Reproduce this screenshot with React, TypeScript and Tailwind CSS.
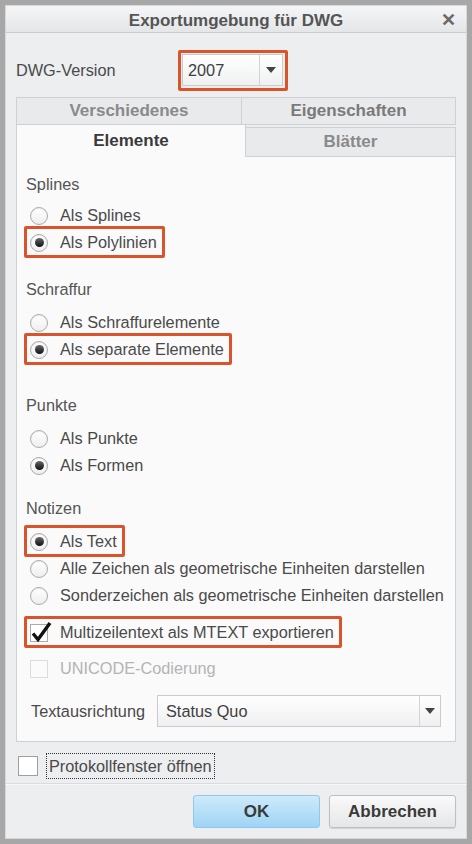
import type { ReactNode } from 'react';

const FONT = "font-['Liberation_Sans',Arial,sans-serif]";

// Red annotation frame drawn over a control (the screenshot's highlight).
function Mark({ children, className = '' }: { children: ReactNode; className?: string }) {
  return (
    <div className={`relative inline-flex ${className}`}>
      {children}
      <span className="pointer-events-none absolute -left-[2px] -right-[8px] -top-[3px] -bottom-[2px] rounded-[2px] border-[3px] border-[#d9532b]" />
    </div>
  );
}

function Radio({ checked, label }: { checked?: boolean; label: string }) {
  return (
    <div className="flex h-[27px] items-center">
      <span className="ml-[4px] flex h-[18px] w-[18px] items-center justify-center rounded-full border border-[#a9abad] bg-gradient-to-b from-white to-[#eeeeee] shadow-[inset_0_1px_1px_rgba(0,0,0,0.08)]">
        {checked && <span className="h-[9px] w-[9px] rounded-full bg-gradient-to-b from-[#6a6a6a] to-[#111]" />}
      </span>
      <span className="ml-[12px] text-[16.3px] text-[#4a4a4a]">{label}</span>
    </div>
  );
}

function Arrow() {
  return (
    <svg width="10" height="6" viewBox="0 0 10 6">
      <path d="M0 0h10L5 6z" fill="#444" />
    </svg>
  );
}

function SectionLabel({ children, className = '' }: { children: ReactNode; className?: string }) {
  return <div className={`flex h-[20px] items-center text-[16.3px] text-[#555] ${className}`}>{children}</div>;
}

export default function App() {
  return (
    <div className={`h-[844px] w-[472px] bg-[#a7a7a7] p-[5px] ${FONT}`}>
      <div className="flex h-full flex-col border border-[#d6d8da] bg-[#eceef0]">
        {/* title bar */}
        <div className="relative flex h-[27px] shrink-0 items-center justify-center border-b border-[#c9cbce] bg-gradient-to-b from-[#f4f5f6] to-[#e4e6e8] pt-[3px]">
          <span className="text-[17px] font-bold text-[#555]">Exportumgebung für DWG</span>
          <span className="absolute right-[10px] top-[4px] text-[18px] font-bold leading-[20px] text-[#6a6a6a]">✕</span>
        </div>

        <div className="flex flex-col px-[10px]">
          {/* DWG version */}
          <div className="mt-[21px] flex h-[32px] items-center">
            <span className="w-[166px] text-[16.3px] text-[#4a4a4a]">DWG-Version</span>
            <div className="relative flex">
              <div className="flex h-[32px] w-[101px] border border-[#c9cbce] bg-gradient-to-b from-white to-[#eff0f1]">
                <span className="flex flex-1 items-center pl-[5px] text-[16.3px] text-[#3f3f3f]">2007</span>
                <span className="flex w-[23px] items-center justify-center border-l border-[#d2d4d6]">
                  <Arrow />
                </span>
              </div>
              <span className="pointer-events-none absolute -left-[4px] -right-[5px] -top-[4px] -bottom-[5px] rounded-[2px] border-[3px] border-[#d9532b]" />
            </div>
          </div>

          {/* tabs */}
          <div className="mt-[11px] flex h-[28px] text-[17px] font-bold">
            <div className="flex w-[226px] items-center justify-center border border-[#cfd2d5] bg-[#e8eaec] text-[#8a8a8a]">Verschiedenes</div>
            <div className="flex flex-1 items-center justify-center border border-l-0 border-[#cfd2d5] bg-[#e8eaec] text-[#7a7a7a]">Eigenschaften</div>
          </div>
          <div className="-mt-[1px] flex h-[33px] text-[17px] font-bold">
            <div className="flex w-[230px] items-center justify-center border border-b-0 border-[#cfd2d5] bg-[#fafafa] text-[#3a3a3a]">Elemente</div>
            <div className="mt-[3px] flex flex-1 items-center justify-center border border-l-0 border-[#cfd2d5] bg-[#e8eaec] text-[#8a8a8a]">Blätter</div>
          </div>

          {/* panel */}
          <div className="flex flex-col border border-t-0 border-[#cfd2d5] bg-[#fafafa] px-[9px] pb-[14px]">
            <SectionLabel className="mt-[17px]">Splines</SectionLabel>
            <div className="mt-[8px]">
              <Radio label="Als Splines" />
              <Mark>
                <Radio checked label="Als Polylinien" />
              </Mark>
            </div>

            <SectionLabel className="mt-[23px]">Schraffur</SectionLabel>
            <div className="mt-[10px]">
              <Radio label="Als Schraffurelemente" />
              <Mark>
                <Radio checked label="Als separate Elemente" />
              </Mark>
            </div>

            <SectionLabel className="mt-[32px]">Punkte</SectionLabel>
            <div className="mt-[10px]">
              <Radio label="Als Punkte" />
              <Radio checked label="Als Formen" />
            </div>

            <SectionLabel className="mt-[19px]">Notizen</SectionLabel>
            <div className="mt-[10px] flex flex-col items-start">
              <Mark>
                <Radio checked label="Als Text" />
              </Mark>
              <Radio label="Alle Zeichen als geometrische Einheiten darstellen" />
              <Radio label="Sonderzeichen als geometrische Einheiten darstellen" />
            </div>

            <div className="mt-[10px] flex">
              <Mark>
                <div className="flex h-[27px] items-center">
                  <span className="relative ml-[4px] h-[18px] w-[18px] border border-[#a9abad] bg-white">
                    <svg className="absolute -left-[1px] -top-[5px]" width="24" height="24" viewBox="0 0 24 24">
                      <path d="M3 13.5l5 6L20 3" fill="none" stroke="#111" strokeWidth="3.4" strokeLinejoin="miter" />
                    </svg>
                  </span>
                  <span className="ml-[12px] text-[16.3px] text-[#4a4a4a]">Multizeilentext als MTEXT exportieren</span>
                </div>
              </Mark>
            </div>

            <div className="mt-[9px] flex h-[27px] items-center">
              <span className="ml-[4px] h-[18px] w-[18px] border border-[#dcdcdc] bg-[#fbfbfb]" />
              <span className="ml-[12px] text-[16.3px] text-[#b4b4b4]">UNICODE-Codierung</span>
            </div>

            <div className="mt-[13px] flex h-[32px] items-center">
              <span className="ml-[5px] w-[126px] text-[16.3px] text-[#4a4a4a]">Textausrichtung</span>
              <div className="mr-[5px] flex h-[32px] flex-1 border border-[#c9cbce] bg-gradient-to-b from-white to-[#eff0f1]">
                <span className="flex flex-1 items-center pl-[8px] text-[16.3px] text-[#3f3f3f]">Status Quo</span>
                <span className="flex w-[21px] items-center justify-center border-l border-[#d2d4d6]">
                  <Arrow />
                </span>
              </div>
            </div>
          </div>

          {/* protocol checkbox */}
          <div className="mt-[10px] flex h-[28px] items-center">
            <span className="ml-[2px] h-[20px] w-[20px] border border-[#9d9fa1] bg-white" />
            <span className="ml-[8px] border border-dotted border-[#333] px-[2px] py-[2px] text-[16.3px] leading-[20px] text-[#4a4a4a]">
              Protokollfenster öffnen
            </span>
          </div>
        </div>

        {/* footer */}
        <div className="mt-auto flex h-[55px] shrink-0 items-start justify-end gap-[9px] border-t border-[#d9dbde] px-[10px] pt-[11px] shadow-[inset_0_1px_0_#f8f8f8]">
          <button className="h-[33px] w-[127px] rounded-[3px] border border-[#8fc8ec] bg-gradient-to-b from-[#cdeafb] to-[#9fd4f5] text-[17px] font-bold text-[#3a3a3a]">
            OK
          </button>
          <button className="h-[33px] w-[127px] rounded-[3px] border border-[#bdbfc1] bg-gradient-to-b from-[#fafafa] to-[#e5e6e7] text-[17px] font-bold text-[#3a3a3a] shadow-[0_1px_1px_rgba(0,0,0,0.12)]">
            Abbrechen
          </button>
        </div>
      </div>
    </div>
  );
}
